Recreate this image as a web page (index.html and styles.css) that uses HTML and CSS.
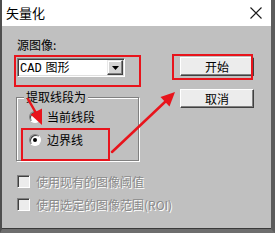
FILE: index.html
```html
<!DOCTYPE html>
<html>
<head>
<meta charset="utf-8">
<link rel="stylesheet" href="styles.css">
</head>
<body>
<div class="screen">
  <div class="window">
    <div class="titlebar">
      <span class="title">矢量化</span>
      <svg class="close" width="12" height="12" viewBox="0 0 12 12"><path d="M0.5 0.5 L11.5 11.5 M11.5 0.5 L0.5 11.5" stroke="#1a1a1a" stroke-width="1.1" fill="none"/></svg>
    </div>
    <div class="body">
      <div class="main">
        <div class="left">
          <div class="label">源图像:</div>
          <div class="combo">
            <span class="combo-text"><span class="mono">CAD</span>图形</span>
            <span class="drop"><svg width="7" height="4" viewBox="0 0 7 4"><path d="M0 0 H7 L3.5 4 Z" fill="#000"/></svg></span>
          </div>
          <div class="group">
            <div class="group-title">提取线段为</div>
            <div class="radio-row"><span class="radio"></span><span>当前线段</span></div>
            <div class="radio-row"><span class="radio checked"></span><span>边界线</span></div>
          </div>
        </div>
        <div class="right">
          <div class="btn">开始</div>
          <div class="btn">取消</div>
        </div>
      </div>
      <div class="checks">
        <div class="check-row"><span class="checkbox"></span><span class="disabled">使用现有的图像阈值</span></div>
        <div class="check-row"><span class="checkbox"></span><span class="disabled">使用选定的图像范围(ROI)</span></div>
      </div>
    </div>
  </div>
  <svg class="annot" width="275" height="233" viewBox="0 0 275 233">
    <g fill="none" stroke="#e8141c" stroke-width="2">
      <rect x="15" y="56" width="125" height="30"/>
      <rect x="22" y="129" width="87" height="31"/>
      <rect x="173" y="55" width="79" height="24"/>
    </g>
    <g stroke="#e8141c" stroke-width="2.5" stroke-linecap="round">
      <line x1="28" y1="99" x2="36" y2="113"/>
      <line x1="112" y1="152" x2="166" y2="101"/>
    </g>
    <g fill="#e8141c">
      <polygon points="42,125 30.5,114.5 42,108.5"/>
      <polygon points="175,92 169.5,106.5 160.5,97"/>
    </g>
  </svg>
</div>
</body>
</html>
```

FILE: styles.css
```css
* { box-sizing: border-box; }
html, body { margin: 0; padding: 0; }
body {
  font-family: "Noto Sans CJK SC", "Noto Sans", sans-serif;
  font-size: 12px;
  color: #000;
  background: #6a6a6a;
}
.screen {
  position: relative;
  width: 275px;
  height: 233px;
  overflow: hidden;
}
.window {
  width: 275px;
  height: 233px;
  display: flex;
  flex-direction: column;
  border-left: 2px solid #4e4e4e;
  border-right: 4px solid #5c5c5c;
  border-bottom: 4px solid #6e6e6e;
}
.titlebar {
  height: 26px;
  flex: none;
  background: #fff;
  display: flex;
  align-items: center;
  justify-content: space-between;
  padding: 0 9px 0 4px;
}
.title { font-size: 13px; line-height: 16px; }
.close { display: block; }
.body {
  flex: 1;
  background: #c0c0c0;
  border-bottom: 1px solid #3a3a3a;
}
.main {
  display: grid;
  grid-template-columns: 125px 74px;
  column-gap: 39px;
  padding-left: 14px;
}
.label {
  margin-top: 11px;
  padding-left: 1px;
  line-height: 16px;
  height: 16px;
}
.combo {
  margin: 5px 0 0 1px;
  width: 108px;
  height: 19px;
  background: #fff;
  border: 1px solid;
  border-color: #808080 #fff #fff #808080;
  box-shadow: inset 1px 1px 0 #404040, inset -1px -1px 0 #dfdfdf;
  display: flex;
  align-items: center;
  justify-content: space-between;
  padding: 1px 1px 1px 2px;
}
.combo-text { line-height: 15px; white-space: nowrap; }
.mono { font-family: "Liberation Mono", monospace; font-size: 12px; margin-right: 4px; }
.drop {
  width: 16px;
  height: 15px;
  background: #d4d4d4;
  border: 1px solid;
  border-color: #e8e8e8 #404040 #404040 #e8e8e8;
  box-shadow: inset -1px -1px 0 #808080, inset 1px 1px 0 #fff;
  display: flex;
  align-items: center;
  justify-content: center;
}
.drop svg { display: block; }
.group {
  margin-top: 20px;
  width: 123px;
  height: 64px;
  border: 1px solid #808080;
  box-shadow: inset 1px 1px 0 #fff, 1px 1px 0 #fff;
}
.group-title {
  margin: -9px 0 0 7px;
  padding: 0 2px;
  width: max-content;
  background: #c0c0c0;
  line-height: 16px;
}
.radio-row {
  height: 23px;
  display: flex;
  align-items: center;
  gap: 6px;
  padding-left: 12px;
}
.radio-row:first-of-type { margin-top: 1px; }
.radio {
  width: 12px;
  height: 12px;
  border-radius: 50%;
  background: #fff;
  border: 1px solid;
  border-color: #808080 #fff #fff #808080;
  box-shadow: inset 1px 1px 0 #404040;
  display: flex;
  align-items: center;
  justify-content: center;
}
.radio.checked::after {
  content: "";
  width: 4px;
  height: 4px;
  border-radius: 50%;
  background: #000;
}
.right {
  display: flex;
  flex-direction: column;
  gap: 13px;
  padding-top: 31px;
}
.btn {
  width: 74px;
  height: 19px;
  background: #ececec;
  border: 1px solid;
  border-color: #fff #404040 #404040 #fff;
  box-shadow: inset -1px -1px 0 #808080;
  display: flex;
  align-items: center;
  justify-content: center;
  line-height: 16px;
}
.checks {
  margin-top: 9px;
  padding-left: 15px;
}
.check-row {
  height: 23px;
  display: flex;
  align-items: center;
  gap: 6px;
}
.checkbox {
  width: 13px;
  height: 13px;
  background: #ececec;
  border: 1px solid;
  border-color: #808080 #fff #fff #808080;
  box-shadow: inset 1px 1px 0 #404040;
}
.disabled {
  color: #8a8a8a;
  text-shadow: 1px 1px 0 #fff;
  white-space: nowrap;
}
.annot {
  position: absolute;
  left: 0;
  top: 0;
  pointer-events: none;
}
```
